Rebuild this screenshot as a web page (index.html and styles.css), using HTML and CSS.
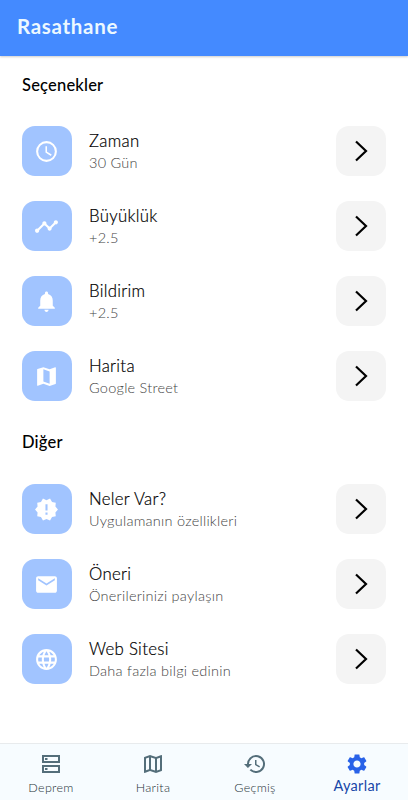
FILE: index.html
```html
<!DOCTYPE html>
<html lang="tr">
<head>
    <meta charset="UTF-8">
    <meta name="viewport" content="width=device-width, initial-scale=1.0">
    <title>Rasathane</title>
    <link rel="stylesheet" href="styles.css">
</head>
<body>
    <header class="appbar">Rasathane</header>
    <main class="content">
        <h2>Seçenekler</h2>
        <div class="row">
            <div class="tile">
                <svg viewBox="0 0 24 24"><path d="M12 2a10 10 0 1 0 0 20 10 10 0 0 0 0-20zm0 18a8 8 0 1 1 0-16 8 8 0 0 1 0 16zm.5-13H11v6l5.200 3.200.8-1.300-4.500-2.700z"/></svg>
            </div>
            <div class="text"><p class="name">Zaman</p><p class="detail">30 Gün</p></div>
            <button class="arrow"><svg viewBox="0 0 24 24"><path d="M7 2.500l10 9.500-10 9.500"/></svg></button>
        </div>
        <div class="row">
            <div class="tile">
                <svg viewBox="0 0 24 24"><path d="M23 8c0 1.100-.9 2-2 2-.18 0-.35-.02-.51-.07l-3.560 3.550c.05.16.07.34.07.52 0 1.100-.9 2-2 2s-2-.9-2-2c0-.18.02-.36.07-.52l-2.550-2.550c-.16.05-.34.07-.52.07s-.36-.02-.52-.07l-4.550 4.560c.05.16.07.33.07.51 0 1.100-.9 2-2 2s-2-.9-2-2 .9-2 2-2c.18 0 .35.02.51.07l4.560-4.550C8.020 9.360 8 9.180 8 9c0-1.100.9-2 2-2s2 .9 2 2c0 .18-.02.36-.07.52l2.550 2.550c.16-.05.34-.07.52-.07s.36.02.52.07l3.550-3.560C19.020 8.350 19 8.180 19 8c0-1.100.9-2 2-2s2 .9 2 2z"/></svg>
            </div>
            <div class="text"><p class="name">Büyüklük</p><p class="detail">+2.5</p></div>
            <button class="arrow"><svg viewBox="0 0 24 24"><path d="M7 2.500l10 9.500-10 9.500"/></svg></button>
        </div>
        <div class="row">
            <div class="tile">
                <svg viewBox="0 0 24 24"><path d="M12 22c1.100 0 2-.9 2-2h-4c0 1.100.9 2 2 2zm6-6v-5c0-3.070-1.640-5.640-4.500-6.320V4c0-.83-.67-1.500-1.500-1.500s-1.500.67-1.500 1.500v.68C7.630 5.360 6 7.920 6 11v5l-2 2v1h16v-1l-2-2z"/></svg>
            </div>
            <div class="text"><p class="name">Bildirim</p><p class="detail">+2.5</p></div>
            <button class="arrow"><svg viewBox="0 0 24 24"><path d="M7 2.500l10 9.500-10 9.500"/></svg></button>
        </div>
        <div class="row">
            <div class="tile">
                <svg viewBox="0 0 24 24"><path d="M20.500 3l-.16.03L15 5.100 9 3 3.360 4.900c-.21.07-.36.25-.36.48V20.500c0 .28.22.5.5.5l.16-.03L9 18.900l6 2.100 5.640-1.900c.21-.07.36-.25.36-.48V3.500c0-.28-.22-.5-.5-.5zM15 19l-6-2.110V5l6 2.110V19z"/></svg>
            </div>
            <div class="text"><p class="name">Harita</p><p class="detail">Google Street</p></div>
            <button class="arrow"><svg viewBox="0 0 24 24"><path d="M7 2.500l10 9.500-10 9.500"/></svg></button>
        </div>
        <h2>Diğer</h2>
        <div class="row">
            <div class="tile">
                <svg viewBox="0 0 24 24"><path d="M23 12l-2.440-2.780.34-3.680-3.610-.82-1.890-3.180L12 3 8.600 1.540 6.710 4.720l-3.610.81.34 3.680L1 12l2.440 2.780-.34 3.690 3.610.82 1.890 3.180L12 21l3.400 1.460 1.890-3.180 3.610-.82-.34-3.680L23 12zm-10 5h-2v-2h2v2zm0-4h-2V7h2v6z"/></svg>
            </div>
            <div class="text"><p class="name">Neler Var?</p><p class="detail">Uygulamanın özellikleri</p></div>
            <button class="arrow"><svg viewBox="0 0 24 24"><path d="M7 2.500l10 9.500-10 9.500"/></svg></button>
        </div>
        <div class="row">
            <div class="tile">
                <svg viewBox="0 0 24 24"><path d="M20 4H4c-1.100 0-1.990.9-1.990 2L2 18c0 1.100.9 2 2 2h16c1.100 0 2-.9 2-2V6c0-1.100-.9-2-2-2zm0 4l-8 5-8-5V6l8 5 8-5v2z"/></svg>
            </div>
            <div class="text"><p class="name">Öneri</p><p class="detail">Önerilerinizi paylaşın</p></div>
            <button class="arrow"><svg viewBox="0 0 24 24"><path d="M7 2.500l10 9.500-10 9.500"/></svg></button>
        </div>
        <div class="row">
            <div class="tile">
                <svg viewBox="0 0 24 24"><path d="M11.990 2C6.470 2 2 6.480 2 12s4.470 10 9.990 10C17.520 22 22 17.520 22 12S17.520 2 11.990 2zm6.930 6h-2.950c-.32-1.250-.78-2.450-1.380-3.560 1.840.63 3.370 1.910 4.330 3.560zM12 4.040c.83 1.200 1.480 2.530 1.910 3.960h-3.820c.43-1.430 1.080-2.760 1.910-3.960zM4.260 14C4.100 13.360 4 12.690 4 12s.1-1.360.26-2h3.380c-.08.66-.14 1.320-.14 2s.06 1.340.14 2H4.260zm.82 2h2.950c.32 1.250.78 2.450 1.380 3.560-1.840-.63-3.370-1.900-4.330-3.560zm2.950-8H5.080c.96-1.660 2.490-2.930 4.330-3.560C8.810 5.550 8.350 6.750 8.030 8zM12 19.960c-.83-1.200-1.480-2.530-1.910-3.960h3.820c-.43 1.430-1.080 2.760-1.910 3.960zM14.340 14H9.660c-.09-.66-.16-1.320-.16-2s.07-1.350.16-2h4.680c.09.65.16 1.320.16 2s-.07 1.340-.16 2zm.25 5.560c.6-1.110 1.060-2.310 1.380-3.560h2.950c-.96 1.650-2.490 2.930-4.330 3.560zM16.360 14c.08-.66.14-1.320.14-2s-.06-1.340-.14-2h3.380c.16.64.26 1.310.26 2s-.1 1.360-.26 2h-3.380z"/></svg>
            </div>
            <div class="text"><p class="name">Web Sitesi</p><p class="detail">Daha fazla bilgi edinin</p></div>
            <button class="arrow"><svg viewBox="0 0 24 24"><path d="M7 2.500l10 9.500-10 9.500"/></svg></button>
        </div>
    </main>
    <nav class="tabs">
        <a class="tab">
            <svg viewBox="0 0 24 24"><path d="M19 5v4H5V5h14m2-2H3v8h18V3zm0 10H3v8h18v-8zm-2 2v4H5v-4h14zM6 6h2.500v2H6zM6 16h2.500v2H6z"/></svg>
            <span>Deprem</span>
        </a>
        <a class="tab">
            <svg viewBox="0 0 24 24"><path d="M20.500 3l-.16.03L15 5.100 9 3 3.360 4.900c-.21.07-.36.25-.36.48V20.500c0 .28.22.5.5.5l.16-.03L9 18.900l6 2.100 5.640-1.900c.21-.07.36-.25.36-.48V3.500c0-.28-.22-.5-.5-.5zM10 5.470l4 1.400v11.660l-4-1.400V5.470zm-5 .99l3-1.010v11.700l-3 1.160V6.460zm14 11.080l-3 1.010V6.860l3-1.160v11.840z"/></svg>
            <span>Harita</span>
        </a>
        <a class="tab">
            <svg viewBox="0 0 24 24"><path d="M13 3a9 9 0 0 0-9 9H1l3.890 3.890.07.14L9 12H6a7 7 0 1 1 2.060 4.940l-1.420 1.420A9 9 0 1 0 13 3zm-1 5v5l4.280 2.540.72-1.210-3.500-2.080V8H12z"/></svg>
            <span>Geçmiş</span>
        </a>
        <a class="tab active">
            <svg viewBox="0 0 24 24"><path d="M19.140 12.940c.04-.3.06-.61.06-.94 0-.32-.02-.64-.07-.94l2.030-1.580c.18-.14.23-.41.12-.61l-1.920-3.320c-.12-.22-.37-.29-.59-.22l-2.390.96c-.5-.38-1.030-.7-1.620-.94l-.36-2.540c-.04-.24-.24-.41-.48-.41h-3.840c-.24 0-.43.17-.47.41l-.36 2.540c-.59.24-1.130.57-1.620.94l-2.390-.96c-.22-.08-.47 0-.59.22L2.740 8.870c-.12.21-.08.47.12.61l2.030 1.580c-.05.3-.09.63-.09.94s.02.64.07.94l-2.030 1.580c-.18.14-.23.41-.12.61l1.920 3.320c.12.22.37.29.59.22l2.390-.96c.5.38 1.030.7 1.620.94l.36 2.540c.05.24.24.41.48.41h3.840c.24 0 .44-.17.47-.41l.36-2.540c.59-.24 1.130-.56 1.620-.94l2.390.96c.22.08.47 0 .59-.22l1.920-3.320c.12-.22.07-.47-.12-.61l-2.010-1.580zM12 15.600c-1.980 0-3.600-1.620-3.600-3.600s1.620-3.600 3.600-3.600 3.600 1.620 3.600 3.600-1.620 3.600-3.600 3.600z"/></svg>
            <span>Ayarlar</span>
        </a>
    </nav>
</body>
</html>
```
FILE: styles.css
```css
* {
    box-sizing: border-box;
}
body {
    margin: 0;
    height: 100vh;
    display: flex;
    flex-direction: column;
    background-color: #ffffff;
    font-family: Lato, "Open Sans", sans-serif;
    font-weight: 300;
    overflow: hidden;
}
.appbar {
    height: 56px;
    padding-left: 17px;
    background-color: #448aff;
    color: #ecf8ff;
    font-size: 20.5px;
    font-weight: 700;
    line-height: 53px;
    letter-spacing: 0.7px;
    box-shadow: 0 1px 2px rgba(0, 0, 0, 0.2);
}
.content {
    flex: 1;
    padding: 17px 22px 0;
}
h2 {
    margin: 0 0 29px;
    font-size: 16.5px;
    font-weight: 500;
    line-height: 24px;
    letter-spacing: 0.2px;
    color: #000000;
}
.row {
    display: flex;
    align-items: center;
    height: 50px;
    margin-bottom: 25px;
}
.row + h2 {
    margin-top: 29px;
    margin-bottom: 30px;
}
.tile {
    display: flex;
    align-items: center;
    justify-content: center;
    width: 50px;
    height: 50px;
    border-radius: 13px;
    background-color: #a1c4ff;
}
.tile svg {
    width: 25px;
    height: 25px;
    margin-right: 1px;
    fill: #ffffff;
}
.text {
    flex: 1;
    padding-left: 17px;
}
.text p {
    margin: 0;
    white-space: nowrap;
}
.name {
    font-size: 16.8px;
    line-height: 22px;
    color: #000000;
    letter-spacing: 0.3px;
    -webkit-text-stroke: 0.2px #000000;
}
.detail {
    font-size: 14.5px;
    line-height: 21px;
    color: #444444;
    letter-spacing: 0.25px;
}
.arrow {
    display: flex;
    align-items: center;
    justify-content: center;
    width: 50px;
    height: 50px;
    padding: 0;
    border: none;
    border-radius: 13px;
    background-color: #f4f4f4;
}
.arrow svg {
    width: 24px;
    height: 24px;
    fill: none;
    stroke: #000000;
    stroke-width: 2.2;
}
.tabs {
    display: flex;
    height: 57px;
    border-top: 1px solid #e8ebed;
    background-color: #f7fcff;
}
.tab {
    flex: 1;
    display: flex;
    flex-direction: column;
    align-items: center;
    padding-top: 8px;
    color: #546e7a;
    font-size: 12.5px;
    line-height: 21px;
    letter-spacing: 0.3px;
}
.tab span {
    color: #263238;
}
.tab svg {
    width: 24px;
    height: 24px;
    margin-bottom: 1px;
    fill: currentColor;
}
.active {
    color: #2962e8;
    font-size: 14.5px;
}
.active span {
    line-height: 18px;
    color: #1747a8;
    font-weight: 400;
}
```
